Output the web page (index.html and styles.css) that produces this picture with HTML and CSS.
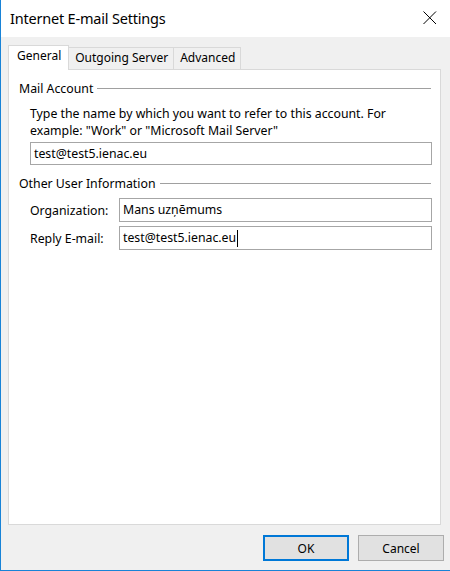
FILE: index.html
```html
<!DOCTYPE html>
<html>
<head>
<meta charset="utf-8">
<link rel="stylesheet" href="styles.css">
</head>
<body>
<div class="window">
  <div class="titlebar">
    <span class="title">Internet E-mail Settings</span>
    <span class="close">
      <svg width="14" height="14" viewBox="0 0 14 14"><path d="M0.5 0.5 L13 13 M13 0.5 L0.5 13" stroke="#000" stroke-width="1" fill="none"/></svg>
    </span>
  </div>
  <div class="content">
    <div class="tabs">
      <div class="tab active">General</div>
      <div class="tab">Outgoing Server</div>
      <div class="tab">Advanced</div>
    </div>
    <div class="panel">
      <div class="group-head"><span>Mail Account</span><span class="rule"></span></div>
      <div class="group-body">
        <p class="desc">Type the name by which you want to refer to this account. For example: "Work" or "Microsoft Mail Server"</p>
        <div class="field first">test@test5.ienac.eu</div>
      </div>
      <div class="group-head second"><span>Other User Information</span><span class="rule"></span></div>
      <div class="group-body">
        <div class="row">
          <span class="label">Organization:</span>
          <div class="field">Mans uzņēmums</div>
        </div>
        <div class="row">
          <span class="label">Reply E-mail:</span>
          <div class="field">test@test5.ienac.eu<span class="caret"></span></div>
        </div>
      </div>
    </div>
    <div class="buttons">
      <div class="btn default">OK</div>
      <div class="btn">Cancel</div>
    </div>
  </div>
</div>
</body>
</html>
```
FILE: styles.css
```css
html, body {
  margin: 0;
  padding: 0;
}
body {
  width: 450px;
  height: 571px;
  overflow: hidden;
  font-family: "Noto Sans", "Open Sans", sans-serif;
  font-size: 12px;
  color: #000;
}
.window {
  box-sizing: border-box;
  width: 450px;
  height: 571px;
  border-left: 1px solid #1883d7;
  border-bottom: 1px solid #1883d7;
  display: flex;
  flex-direction: column;
  background: #f0f0f0;
}
.titlebar {
  height: 37px;
  background: #fff;
  display: flex;
  align-items: center;
  justify-content: space-between;
  padding: 0 13px 0 9px;
  flex: none;
}
.title {
  font-size: 14.5px;
  letter-spacing: -0.2px;
  margin-top: -1px;
}
.close {
  display: flex;
  width: 14px;
  height: 14px;
  margin-top: -1px;
}
.content {
  flex: 1;
  display: flex;
  flex-direction: column;
  padding: 8px 6px 0 7px;
}
.tabs {
  display: flex;
  align-items: flex-end;
  height: 24px;
  position: relative;
  z-index: 1;
}
.tab {
  box-sizing: border-box;
  height: 22px;
  line-height: 20px;
  border: 1px solid #d9d9d9;
  border-bottom: none;
  border-left: none;
  padding: 0 5px 0 6px;
  background: #f0f0f0;
}
.tab.active {
  height: 25px;
  margin-bottom: -1px;
  background: #fff;
  border-left: 1px solid #d9d9d9;
  padding: 0 7px 4px 8px;
  line-height: 19px;
}
.panel {
  box-sizing: border-box;
  width: 433px;
  height: 456px;
  background: #fff;
  border: 1px solid #d9d9d9;
  padding: 11px 8px 0 10px;
  font-size: 12.3px;
}
.group-head {
  display: flex;
  align-items: center;
  height: 16px;
  line-height: 16px;
}
.group-head.second {
  margin-top: 11px;
}
.rule {
  flex: 1;
  border-top: 1px solid #a0a0a0;
  margin-left: 4px;
  margin-right: 1px;
  margin-top: -1px;
}
.group-body {
  margin-left: 11px;
}
.desc {
  margin: 8px 0 0 0;
  line-height: 17px;
  padding-right: 10px;
}
.field {
  box-sizing: border-box;
  height: 24px;
  line-height: 22px;
  border: 1px solid #a6a6a6;
  padding: 0 3px;
  flex: 1;
  display: flex;
  align-items: center;
}
.field.first {
  margin-top: 3px;
  height: 23px;
}
.row {
  display: flex;
  align-items: center;
  margin-top: 4px;
}
.group-head.second + .group-body .row:first-child {
  margin-top: 6px;
}
.label {
  width: 89px;
  flex: none;
}
.caret {
  display: inline-block;
  width: 1px;
  height: 17px;
  background: #000;
  margin-left: 1px;
}
.buttons {
  display: flex;
  justify-content: flex-end;
  gap: 9px;
  padding-top: 10px;
}
.btn {
  box-sizing: border-box;
  width: 86px;
  height: 26px;
  border: 1px solid #adadad;
  background: #e1e1e1;
  display: flex;
  align-items: center;
  justify-content: center;
}
.btn.default {
  border: 2px solid #0078d7;
}
```
